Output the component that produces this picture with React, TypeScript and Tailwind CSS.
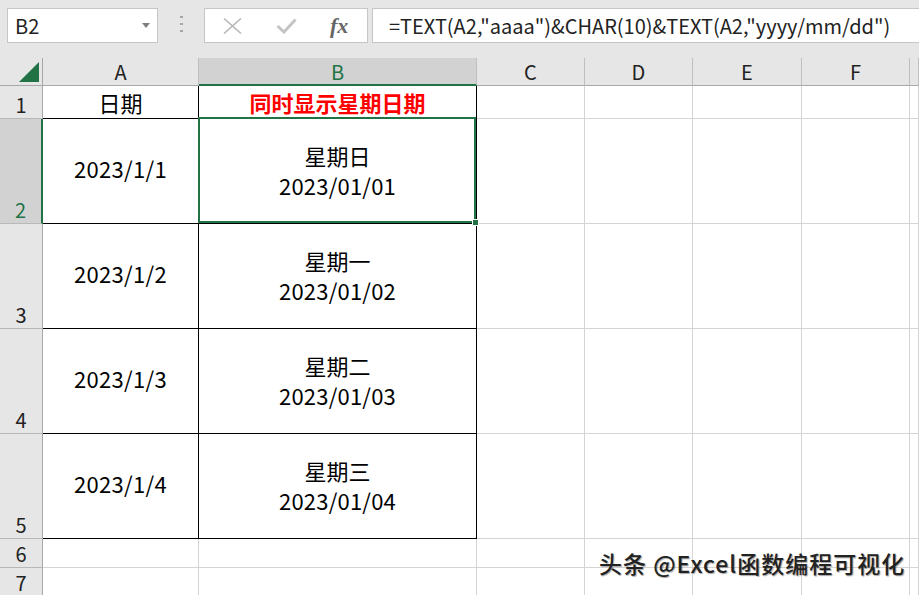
import React from "react";

const aVals = ["日期", "2023/1/1", "2023/1/2", "2023/1/3", "2023/1/4"];
const bVals = [
  ["星期日", "2023/01/01"],
  ["星期一", "2023/01/02"],
  ["星期二", "2023/01/03"],
  ["星期三", "2023/01/04"],
];
const letters = ["C", "D", "E", "F", ""];

function TopBar() {
  return (
    <div className="flex h-[58px] bg-[#e6e6e6] pt-[8px]">
      {/* name box */}
      <div className="ml-[7px] flex h-[35px] w-[151px] items-center justify-between border border-[#c6c6c6] bg-white pl-[7px] pr-[7px] text-[20px] text-[#222]">
        <span>B2</span>
        <svg width="8" height="5" viewBox="0 0 8 5">
          <polygon points="0,0 8,0 4,5" fill="#808080" />
        </svg>
      </div>
      {/* dots */}
      <div className="flex w-[46px] flex-col items-center pt-[8px] gap-[5px]">
        <span className="h-[2px] w-[3px] bg-[#a6a6a6]" />
        <span className="h-[2px] w-[3px] bg-[#a6a6a6]" />
        <span className="h-[2px] w-[3px] bg-[#a6a6a6]" />
      </div>
      {/* function box */}
      <div className="flex h-[35px] w-[164px] items-center border border-[#c6c6c6] bg-white">
        <svg className="ml-[18px]" width="19" height="16" viewBox="0 0 19 16">
          <path d="M1 0.5 L18 15.5 M18 0.5 L1 15.5" stroke="#b8b8b8" strokeWidth="1.6" fill="none" />
        </svg>
        <svg className="ml-[34px]" width="21" height="16" viewBox="0 0 21 16">
          <path d="M1.5 8 L8 14 L19.5 1.5" stroke="#c4c4c4" strokeWidth="3" fill="none" />
        </svg>
        <span className="ml-[33px] font-['Liberation_Serif',serif] text-[22px] italic font-bold leading-none text-[#666]">
          fx
        </span>
      </div>
      {/* formula */}
      <div className="ml-[4px] flex h-[35px] flex-1 items-center border border-r-0 border-[#c6c6c6] bg-white pl-[16px] text-[20px] text-[#222] whitespace-nowrap">
        =TEXT(A2,"aaaa")&amp;CHAR(10)&amp;TEXT(A2,"yyyy/mm/dd")
      </div>
    </div>
  );
}

function RowHead({ n, sel }: { n: number; sel?: boolean }) {
  return (
    <div
      className={
        "flex items-end justify-center border-b border-[#b8b8b8] pb-[1px] text-[20px] leading-[24px] " +
        (sel
          ? "border-r-2 border-r-[#217346] bg-[#d2d2d2] text-[#217346]"
          : "border-r border-r-[#a8a8a8] bg-[#e6e6e6] text-[#222]")
      }
    >
      {n}
    </div>
  );
}

function Sheet() {
  return (
    <div className="grid grid-cols-[43px_156px_278px_108px_108px_109px_108px_1fr] grid-rows-[28px_33px_105px_105px_105px_105px_29px_29px]">
      {/* header row */}
      <div className="relative border-r border-b border-r-[#a8a8a8] border-b-[#a8a8a8] bg-[#e6e6e6]">
        <svg className="absolute right-[3px] bottom-[3px]" width="20" height="20" viewBox="0 0 20 20">
          <polygon points="20,0 20,20 0,20" fill="#217346" />
        </svg>
      </div>
      <div className="flex items-center justify-center border-r border-b border-r-[#bfbfbf] border-b-[#a8a8a8] bg-[#e6e6e6] text-[20px] leading-[24px] text-[#222]">
        A
      </div>
      <div className="flex items-center justify-center border-r border-b-2 border-r-[#bfbfbf] border-b-[#217346] bg-[#d2d2d2] pt-[1px] text-[20px] leading-[24px] text-[#217346]">
        B
      </div>
      {letters.map((l, i) => (
        <div
          key={i}
          className="flex items-center justify-center border-r border-b border-r-[#bfbfbf] border-b-[#a8a8a8] bg-[#e6e6e6] text-[20px] leading-[24px] text-[#222]"
        >
          {l}
        </div>
      ))}

      {/* row 1 */}
      <RowHead n={1} />
      <div className="flex items-center justify-center border-r border-b border-black text-[22px] text-black">
        {aVals[0]}
      </div>
      <div className="flex items-center justify-center border-r border-b border-black text-[22px] font-bold text-[#ff0000]">
        同时显示星期日期
      </div>
      {letters.map((_, i) => (
        <div key={i} className="border-r border-b border-[#d4d4d4]" />
      ))}

      {/* rows 2-5 */}
      {bVals.map((b, r) => (
        <React.Fragment key={r}>
          <RowHead n={r + 2} sel={r === 0} />
          <div className="flex items-center justify-center border-r border-b border-black pb-[5px] text-[22px] tracking-[0.3px] text-black">
            {aVals[r + 1]}
          </div>
          <div className="relative flex flex-col items-center justify-center border-r border-b border-black pb-[3px] text-[22px] leading-[30px] text-black">
            <span>{b[0]}</span>
            <span className="tracking-[0.2px]">{b[1]}</span>
            {r === 0 && (
              <div className="absolute -top-[2px] -left-[1px] right-0 bottom-0 z-10 border-2 border-[#217346]">
                <div className="absolute -right-[5px] -bottom-[5px] h-[7px] w-[7px] border border-white bg-[#217346]" />
              </div>
            )}
          </div>
          {letters.map((_, i) => (
            <div key={i} className="border-r border-b border-[#d4d4d4]" />
          ))}
        </React.Fragment>
      ))}

      {/* rows 6-7 */}
      {[6, 7].map((n) => (
        <React.Fragment key={n}>
          <RowHead n={n} />
          <div className="border-r border-b border-[#d4d4d4]" />
          <div className="border-r border-b border-[#d4d4d4]" />
          {letters.map((_, i) => (
            <div key={i} className="border-r border-b border-[#d4d4d4]" />
          ))}
        </React.Fragment>
      ))}
    </div>
  );
}

export default function App() {
  return (
    <div className="relative h-[595px] w-[919px] overflow-hidden bg-white font-['Noto_Sans_CJK_SC',sans-serif]">
      <TopBar />
      <Sheet />
      <div className="absolute left-[599px] top-[547px] text-[23px] leading-[32px] tracking-[1px] font-medium text-[#222] [text-shadow:1px_1px_1px_rgba(0,0,0,0.35)] whitespace-nowrap">
        头条 @Excel函数编程可视化
      </div>
    </div>
  );
}
